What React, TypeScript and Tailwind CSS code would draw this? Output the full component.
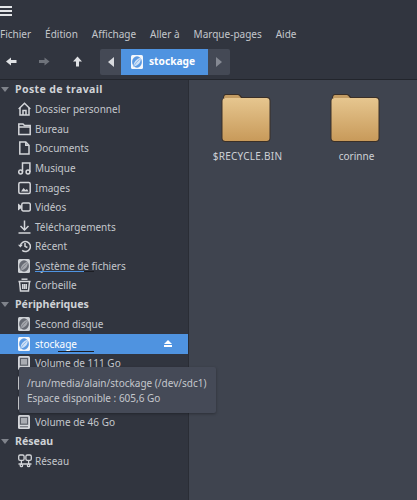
import React from "react";

const Disk = ({ light = false }: { light?: boolean }) => {
  const a = light ? "#f4f7fb" : "#ced1d5";
  const b = light ? "#5c9ae2" : "#666a73";
  const c = light ? "#cfe1f6" : "#a4a7ad";
  return (
    <svg width="12" height="14" viewBox="0 0 12 14" className="shrink-0">
      <rect x="0" y="0" width="12" height="14" rx="1.5" fill={a} />
      <ellipse cx="6" cy="7" rx="4.9" ry="5.8" fill={b} />
      <path d="M2.6 11.5 C2.4 7.5 5 3.8 9.6 2.8 C10.4 6.8 8 10.4 2.6 11.5Z" fill={c} />
      <path d="M2.6 11.5 C4.5 8.5 6 6.5 8.6 4.4" fill="none" stroke={b} strokeWidth="0.6" />
    </svg>
  );
};

const Vol = () => (
  <svg width="12" height="14" viewBox="0 0 12 14" className="shrink-0">
    <rect x="0" y="0" width="12" height="14" rx="1.5" fill="#d6d8dc" />
    <rect x="1.8" y="1.8" width="8.4" height="8" fill="#5d616a" />
    <rect x="3" y="3" width="6" height="5.6" fill="#a9acb2" />
    <rect x="2" y="11.3" width="8" height="1" fill="#5d616a" />
  </svg>
);

const s = { fill: "none", stroke: "#d4d6da", strokeWidth: 1.5 };

const icons: Record<string, React.ReactNode> = {
  home: (
    <svg width="13" height="14" viewBox="0 0 13 14" {...s}>
      <path d="M0.7 7 L6.5 1.2 L12.3 7" /><path d="M2 5.8 V13 H11 V5.8" /><path d="M5 13 V8.5 H8 V13" />
    </svg>
  ),
  folder: (
    <svg width="13" height="14" viewBox="0 0 13 14" {...s}>
      <path d="M0.8 12.5 V2 H5 L6.5 3.5 H12.2 V12.5 Z" /><path d="M0.8 5 H12.2" />
    </svg>
  ),
  doc: (
    <svg width="13" height="14" viewBox="0 0 13 14" {...s}>
      <path d="M1.8 1 H7.8 L11 4.2 V13 H1.8 Z" /><path d="M7.8 1 V4.2 H11" />
    </svg>
  ),
  music: (
    <svg width="13" height="14" viewBox="0 0 13 14" {...s}>
      <circle cx="2.6" cy="11" r="1.9" /><circle cx="10" cy="11" r="1.9" /><path d="M4.5 11 V2 H11.9 V11" />
    </svg>
  ),
  image: (
    <svg width="13" height="14" viewBox="0 0 13 14" {...s}>
      <rect x="0.8" y="1.5" width="11.4" height="11" rx="1.5" />
      <path d="M3 10.5 L5.5 7 L7.5 9 L9 8 L10.5 10.5Z" fill="#d4d6da" stroke="none" />
    </svg>
  ),
  video: (
    <svg width="13" height="14" viewBox="0 0 13 14" {...s}>
      <rect x="3.8" y="3" width="8.5" height="8" rx="1.5" /><path d="M0 3.5 L3.5 6 V8 L0 10.5Z" fill="#d4d6da" stroke="none" />
    </svg>
  ),
  down: (
    <svg width="13" height="14" viewBox="0 0 13 14" {...s}>
      <path d="M6.5 0.5 V10" /><path d="M2.5 6 L6.5 10 L10.5 6" /><path d="M0.5 13 H12.5" />
    </svg>
  ),
  recent: (
    <svg width="13" height="14" viewBox="0 0 13 14" {...s}>
      <path d="M2.4 7 A5 5 0 1 1 4.2 11.4" /><path d="M7 4 V7.3 L9.4 8.5" /><path d="M0 5.8 H4.8 L2.4 8.6Z" fill="#d4d6da" stroke="none" />
    </svg>
  ),
  trash: (
    <svg width="13" height="14" viewBox="0 0 13 14" {...s}>
      <path d="M0.5 3.5 H12.5" /><path d="M3.5 1.2 H9.5" /><path d="M1.5 3.5 L2.5 13 H10.5 L11.5 3.5" /><path d="M4.7 6 V11 M6.5 6 V11 M8.3 6 V11" />
    </svg>
  ),
  net: (
    <svg width="14" height="14" viewBox="0 0 14 14" {...s} strokeWidth="1.3">
      <rect x="0.7" y="1" width="5.4" height="5.4" rx="1.4" /><rect x="7.9" y="1" width="5.4" height="5.4" rx="1.4" />
      <path d="M3.4 6.4 V10 M10.6 6.4 V10 M0.5 10 H13.5" /><circle cx="3.4" cy="11.5" r="1.2" /><circle cx="10.6" cy="11.5" r="1.2" />
    </svg>
  ),
};

const Arrow = ({ d, c }: { d: string; c: string }) => (
  <svg width="11" height="11" viewBox="0 0 11 11"><path d={d} fill={c} /></svg>
);

const Header = ({ label, wide }: { label: string; wide?: boolean }) => (
  <div className="h-[19.55px] flex items-center">
    <svg width="8" height="5" viewBox="0 0 8 5" className="ml-[1px] mr-[6px]"><path d="M0 0 H8 L4 5Z" fill="#7f838b" /></svg>
    <span className={`font-bold text-[10.6px] text-[#cfd2d6] ${wide ? "tracking-[0.35px]" : ""}`}>{label}</span>
  </div>
);

const Row = ({ icon, label }: { icon: React.ReactNode; label?: React.ReactNode }) => (
  <div className="h-[19.55px] flex items-center">
    <div className="w-[35px] pl-[18px] shrink-0 flex items-center">{icon}</div>
    {label && <span className="whitespace-nowrap">{label}</span>}
  </div>
);

const Folder = ({ label, id, wide }: { label: string; id: string; wide?: boolean }) => (
  <div className="w-[109px] flex flex-col items-center">
    <svg width="50" height="50" viewBox="0 0 50 50" className="-ml-[4px]">
      <defs>
        <linearGradient id={id} x1="0" y1="0" x2="0" y2="1">
          <stop offset="0" stopColor="#e6c68f" />
          <stop offset="1" stopColor="#c89a5a" />
        </linearGradient>
      </defs>
      <path d="M2 6 Q2 1 5 1 H17 Q19 1 21 4 H46 Q49.5 4 49.5 8 V45 Q49.5 49 45 49 H5 Q0.5 49 0.5 45 V8 Q0.5 6 2 6Z" fill="#3a2f27" />
      <path d="M3 5 Q3 2 5 2 H17 Q18 2 20 5Z" fill="#c39c63" />
      <rect x="1.5" y="5" width="47" height="43" rx="3" fill={`url(#${id})`} />
    </svg>
    <span className={`mt-[8px] text-[#ced1d6] whitespace-nowrap ${wide ? "tracking-[0.25px]" : ""}`}>{label}</span>
  </div>
);

export default function App() {
  return (
    <div className="relative w-[417px] h-[500px] overflow-hidden flex flex-col bg-[#31353f] text-[#c4c7cc] text-[10px] leading-none font-['Noto_Sans',sans-serif]">
      <div className="h-[23px] shrink-0 pt-[6px]">
        <div className="w-[12px] flex flex-col gap-[2.5px]">
          <div className="h-[1.5px] bg-[#e3e5e8]" />
          <div className="h-[1.5px] bg-[#e3e5e8]" />
          <div className="h-[1.5px] bg-[#e3e5e8]" />
        </div>
      </div>
      <div className="h-[21px] shrink-0 flex items-center gap-[14px]">
        <span>Fichier</span><span>Édition</span><span>Affichage</span><span>Aller à</span><span>Marque-pages</span><span>Aide</span>
      </div>
      <div className="h-[36px] shrink-0 flex items-center border-b border-[#22252c]">
        <div className="w-[100px] flex items-center pl-[6px] gap-[22px]">
          <Arrow c="#dfe1e4" d="M0 5.5 L5 1.5 V4 H10.5 V7 H5 V9.5Z" />
          <Arrow c="#6f737b" d="M10.5 5.5 L5.5 1.5 V4 H0 V7 H5.5 V9.5Z" />
          <Arrow c="#dfe1e4" d="M5.5 0.5 L10 5.5 H7 V10.5 H4 V5.5 H1Z" />
        </div>
        <div className="w-[130px] h-[26px] flex items-stretch rounded-[2px] bg-[#444955] overflow-hidden">
          <div className="w-[21px] flex items-center justify-center"><svg width="6" height="10" viewBox="0 0 6 10"><path d="M6 0 V10 L0 5Z" fill="#d8dade" /></svg></div>
          <div className="w-[87px] bg-[#4f93e0] flex items-center pl-[10px] gap-[6px] text-white font-bold text-[10.2px]">
            <Disk light /><span>stockage</span>
          </div>
          <div className="w-[22px] flex items-center justify-center"><svg width="6" height="10" viewBox="0 0 6 10"><path d="M0 0 V10 L6 5Z" fill="#858993" /></svg></div>
        </div>
      </div>
      <div className="flex flex-1 min-h-0">
        <div className="w-[189px] shrink-0 border-r border-[#2a2d35]">
          <Header label="Poste de travail" wide />
          <Row icon={icons.home} label="Dossier personnel" />
          <Row icon={icons.folder} label="Bureau" />
          <Row icon={icons.doc} label="Documents" />
          <Row icon={icons.music} label="Musique" />
          <Row icon={icons.image} label="Images" />
          <Row icon={icons.video} label="Vidéos" />
          <Row icon={icons.down} label="Téléchargements" />
          <Row icon={icons.recent} label="Récent" />
          <Row icon={<Disk />} label={<span className="relative">Système de fichiers<span className="absolute left-0 top-[12px] w-[49px] h-[1px] bg-[#4f93e0]" /><span className="absolute left-[49px] top-[12px] w-[10px] h-[1px] bg-[#1c1e24]" /></span>} />
          <Row icon={icons.trash} label="Corbeille" />
          <Header label="Périphériques" />
          <Row icon={<Disk />} label="Second disque" />
          <div className="h-[19.55px] flex items-center bg-[#4f93e0] text-white">
            <div className="w-[35px] pl-[18px] shrink-0 flex items-center"><Disk light /></div>
            <span className="relative">stockage<span className="absolute left-[23px] top-[12px] w-[36px] h-[1px] bg-[#1c1e24]" /></span>
            <svg width="8" height="7" viewBox="0 0 8 7" className="ml-auto mr-[16px]"><path d="M4 0 L8 4 H0Z M0 5 H8 V7 H0Z" fill="#fff" /></svg>
          </div>
          <Row icon={<Vol />} label="Volume de 111 Go" />
          <Row icon={<Vol />} />
          <Row icon={<Vol />} />
          <Row icon={<Vol />} label="Volume de 46 Go" />
          <Header label="Réseau" />
          <Row icon={icons.net} label="Réseau" />
        </div>
        <div className="flex-1 bg-[#3f444f] pt-[13px] pl-[4px] flex">
          <Folder label="$RECYCLE.BIN" id="fa" wide />
          <Folder label="corinne" id="fb" />
        </div>
      </div>
      <div className="absolute left-[19px] top-[367px] w-[197px] h-[46px] bg-[#454a57] rounded-[2px] pl-[8px] pt-[9px] leading-[15px] shadow-[0_1px_3px_rgba(0,0,0,0.3)]">
        <div className="whitespace-nowrap">/run/media/alain/stockage (/dev/sdc1)</div>
        <div className="whitespace-nowrap">Espace disponible : 605,6 Go</div>
      </div>
    </div>
  );
}
